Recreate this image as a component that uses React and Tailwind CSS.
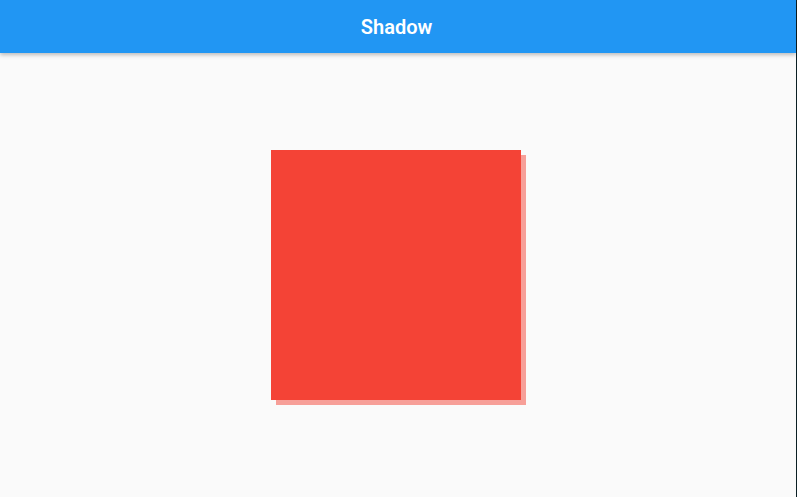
export default function App() {
  return (
    <div className="h-[497px] flex bg-[#0b1f24]">
      <div className="w-[796px] flex flex-col bg-[#fafafa] font-['Roboto',sans-serif]">
        <header className="h-[53px] bg-[#2196f3] flex items-center justify-center shadow-[0_2px_4px_rgba(0,0,0,0.25)] z-10">
          <h1 className="text-white text-[20px] font-semibold pr-[3px]">Shadow</h1>
        </header>
        <main className="flex-1 flex items-center justify-center">
          <div className="w-[250px] h-[250px] bg-[#f44336] shadow-[5px_5px_0_rgba(244,67,54,0.5)] mr-[5px]" />
        </main>
      </div>
    </div>
  );
}
